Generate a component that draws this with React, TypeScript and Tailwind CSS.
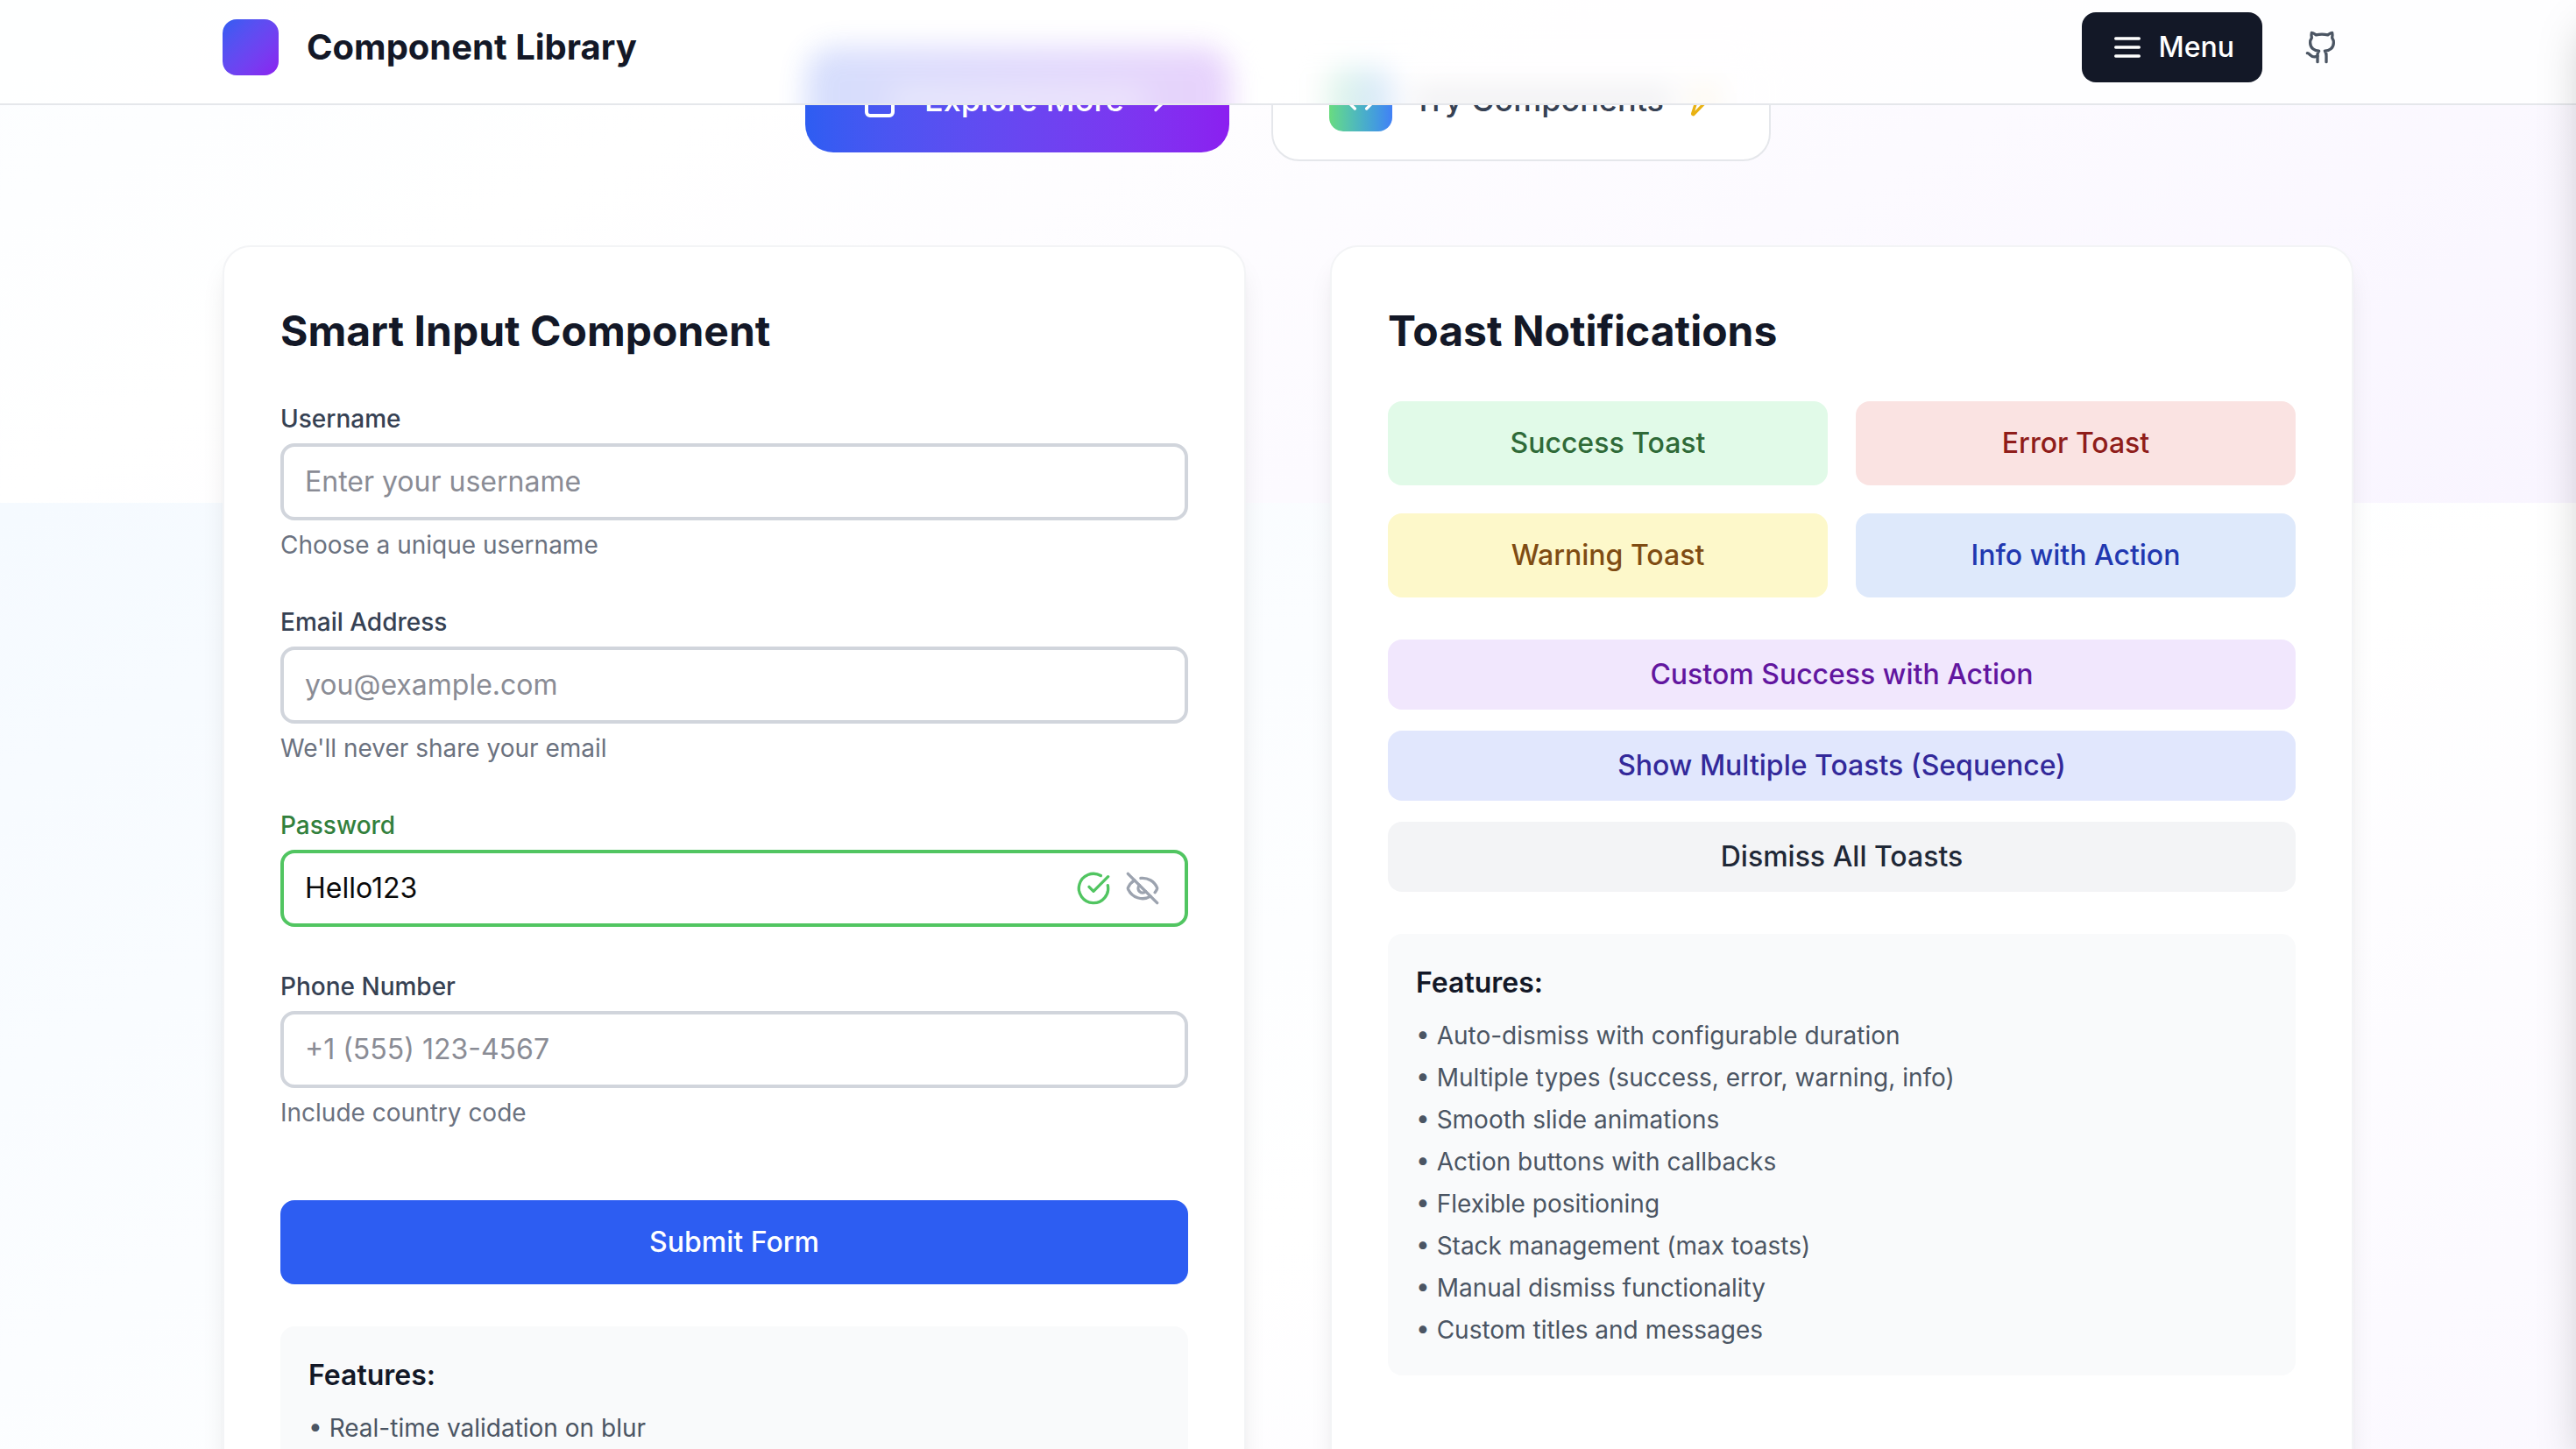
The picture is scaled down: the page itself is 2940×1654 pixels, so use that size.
import { useState } from "react";
import type { ReactNode } from "react";
import { ArrowRight, CircleCheckBig, Code, ExternalLink, EyeOff, Github, Zap } from "lucide-react";
import clsx from "clsx";

const inputFeatures = ["Real-time validation on blur"];

const toastFeatures = [
  "Auto-dismiss with configurable duration",
  "Multiple types (success, error, warning, info)",
  "Smooth slide animations",
  "Action buttons with callbacks",
  "Flexible positioning",
  "Stack management (max toasts)",
  "Manual dismiss functionality",
  "Custom titles and messages",
];

const smallToasts = [
  { label: "Success Toast", style: "bg-[#e1fae8] text-[#2f6a38]" },
  { label: "Error Toast", style: "bg-[#fae3e2] text-[#8f1d1a]" },
  { label: "Warning Toast", style: "bg-[#fdf8ca] text-[#7f4c13]" },
  { label: "Info with Action", style: "bg-[#dee9fb] text-[#2138b0]" },
];

const wideToasts = [
  { label: "Custom Success with Action", style: "bg-[#f1e7fd] text-[#62169f]" },
  { label: "Show Multiple Toasts (Sequence)", style: "bg-[#e1e7fd] text-[#33299a]" },
  { label: "Dismiss All Toasts", style: "bg-[#f3f4f6] text-[#1f2837]" },
];

function MenuIcon() {
  return (
    <svg className="size-10" viewBox="0 0 24 24" fill="none" stroke="currentColor" strokeWidth="2" strokeLinecap="round" aria-hidden="true">
      <path d="M4 6h16M4 12h16M4 18h16" />
    </svg>
  );
}

/* Frosted reflection of the hero buttons that have scrolled under the header. */
function FrostedGlow() {
  return (
    <div aria-hidden="true" className="pointer-events-none absolute inset-0 overflow-hidden">
      <div className="flex items-center justify-center gap-12 pt-11 opacity-20 blur-lg">
        <div className="flex h-30 w-[484px] items-center justify-center rounded-4xl bg-linear-to-r from-[#2d5df2] to-[#8b1ff0]">
          <div className="h-5 w-72 bg-white/50" />
        </div>
        <div className="flex h-35 w-[569px] items-center gap-6 rounded-4xl bg-white px-16">
          <div className="size-18 rounded-2xl bg-linear-to-r from-[#69db7f] to-[#4280f6]" />
          <div className="h-5 flex-1 bg-[#364153]/50" />
          <div className="size-6 bg-[#e9b213]/60" />
        </div>
      </div>
    </div>
  );
}

function Header() {
  return (
    <header className="relative z-20 border-b-2 border-[#e5e7eb] bg-white/80">
      <FrostedGlow />
      <div className="relative mx-auto flex h-[118px] max-w-[2560px] items-center justify-between px-16 pb-[10px]">
        <div className="flex items-center gap-8">
          <div className="size-16 rounded-2xl bg-linear-to-br from-[#2d5df2] to-[#8b1ff0]" />
          <span className="text-[40px] leading-14 font-bold text-[#131827]">Component Library</span>
        </div>
        <div className="flex items-center gap-8">
          <button type="button" className="flex items-center gap-4 rounded-2xl bg-[#131827] px-8 py-4 text-[32px] leading-12 font-medium text-white">
            <MenuIcon />
            Menu
          </button>
          <a href="#github" aria-label="GitHub" className="p-4 text-[#4b5563]">
            <Github className="size-10" />
          </a>
        </div>
      </div>
    </header>
  );
}

function HeroActions() {
  return (
    <div className="flex items-center justify-center gap-12">
      <button type="button" className="flex items-center gap-4 rounded-4xl bg-linear-to-r from-[#2d5df2] to-[#8b1ff0] px-16 py-8 text-[36px] leading-14 font-medium text-white">
        <ExternalLink className="mr-2 size-12" />
        Explore More
        <ArrowRight className="size-10" />
      </button>
      <button type="button" className="flex items-center gap-4 rounded-4xl border-2 border-[#e5e7eb] bg-white px-16 py-8 text-[36px] leading-14 font-medium text-[#364153]">
        <span className="mr-2 flex size-18 items-center justify-center rounded-2xl bg-linear-to-r from-[#69db7f] to-[#4280f6] text-white">
          <Code className="size-10" />
        </span>
        Try Components
        <Zap className="size-10 text-[#e9b213]" />
      </button>
    </div>
  );
}

function Card({ title, children }: { title: string; children: ReactNode }) {
  return (
    <section className="rounded-4xl border-2 border-[#f3f4f6] bg-white p-16 shadow-[0_20px_30px_-6px_rgb(0_0_0/0.1),0_8px_12px_-8px_rgb(0_0_0/0.1)]">
      <h2 className="mb-12 text-[48px] leading-16 font-bold text-[#131827]">{title}</h2>
      {children}
    </section>
  );
}

function FeatureList({ items }: { items: string[] }) {
  return (
    <div className="mt-12 rounded-2xl bg-[#f9fafb] p-8">
      <h3 className="mb-4 text-[32px] leading-12 font-semibold text-[#131827]">Features:</h3>
      <ul className="space-y-2 text-[28px] leading-10 text-[#4b5563]">
        {items.map((item) => (
          <li key={item}>• {item}</li>
        ))}
      </ul>
    </div>
  );
}

type FieldProps = {
  id: string;
  label: string;
  type?: string;
  placeholder?: string;
  initial?: string;
  help?: string;
  valid?: boolean;
};

function Field({ id, label, type = "text", placeholder, initial = "", help, valid = false }: FieldProps) {
  const [value, setValue] = useState(initial);
  return (
    <div>
      <label htmlFor={id} className={clsx("mb-2 block text-[28px] leading-10 font-medium", valid ? "text-[#32803d]" : "text-[#364153]")}>
        {label}
      </label>
      <div className="relative">
        <input
          id={id}
          type={type}
          value={value}
          placeholder={placeholder}
          onChange={(e) => setValue(e.target.value)}
          className={clsx(
            "block w-full rounded-2xl border-4 bg-white px-6 py-4 text-[32px] leading-12 text-[#0a0a0a] outline-none placeholder:text-[#8a8c95]",
            valid ? "border-[#51c561] pr-36" : "border-[#d1d5dc]",
          )}
        />
        {valid && (
          <div className="absolute inset-y-0 right-8 flex items-center gap-4">
            <CircleCheckBig className="size-10 text-[#51c561]" />
            <button type="button" aria-label="Hide password" className="text-[#9ca3af]">
              <EyeOff className="size-10" />
            </button>
          </div>
        )}
      </div>
      {help && <p className="mt-2 text-[28px] leading-10 text-[#6b7280]">{help}</p>}
    </div>
  );
}

export default function App() {
  return (
    <div className="flex h-screen flex-col overflow-hidden bg-white bg-linear-to-br from-[#f5faff] via-white to-[#f9f5ff] bg-[length:100%_100vh] bg-[position:0_574px] font-['Inter',sans-serif]">
      <Header />
      <main className="min-h-0 flex-1 overflow-hidden">
        {/* The page is scrolled so that the hero buttons sit halfway under the header. */}
        <div className="mx-auto -mt-19 max-w-[2560px] px-16">
          <HeroActions />
          <div className="mt-24 grid grid-cols-2 gap-24">
            <Card title="Smart Input Component">
              <form onSubmit={(e) => e.preventDefault()}>
                <div className="space-y-12">
                  <Field id="username" label="Username" placeholder="Enter your username" help="Choose a unique username" />
                  <Field id="email" label="Email Address" type="email" placeholder="you@example.com" help="We'll never share your email" />
                  <Field id="password" label="Password" initial="Hello123" valid />
                  <Field id="phone" label="Phone Number" type="tel" placeholder="+1 (555) 123-4567" help="Include country code" />
                </div>
                <button type="submit" className="mt-20 w-full rounded-2xl bg-[#2d5df2] py-6 text-[32px] leading-12 font-medium text-white">
                  Submit Form
                </button>
              </form>
              <FeatureList items={inputFeatures} />
            </Card>
            <Card title="Toast Notifications">
              <div className="grid grid-cols-2 gap-8">
                {smallToasts.map((t) => (
                  <button key={t.label} type="button" className={clsx("rounded-2xl py-6 text-[32px] leading-12 font-medium", t.style)}>
                    {t.label}
                  </button>
                ))}
              </div>
              <div className="mt-12 space-y-6">
                {wideToasts.map((t) => (
                  <button key={t.label} type="button" className={clsx("block w-full rounded-2xl py-4 text-[32px] leading-12 font-medium", t.style)}>
                    {t.label}
                  </button>
                ))}
              </div>
              <FeatureList items={toastFeatures} />
            </Card>
          </div>
        </div>
      </main>
      <aside aria-hidden="true" className="fixed inset-y-0 left-full z-30 w-160 bg-white shadow-[0_25px_50px_-12px_rgb(0_0_0/0.25)]" />
    </div>
  );
}
